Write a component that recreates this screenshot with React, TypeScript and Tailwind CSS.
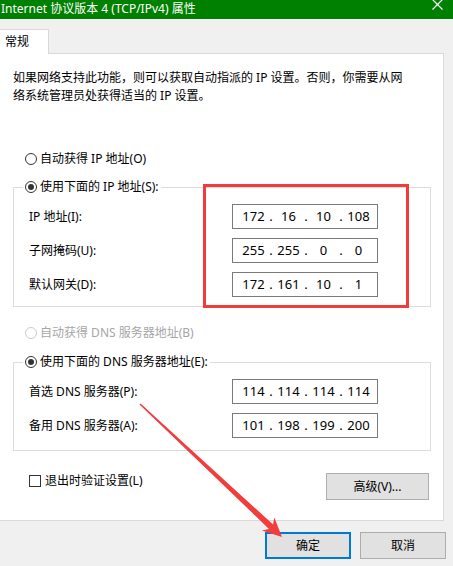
import { Fragment } from "react";

const ipRows = [
  { label: "IP 地址(I):", parts: ["172", "16", "10", "108"] },
  { label: "子网掩码(U):", parts: ["255", "255", "0", "0"] },
  { label: "默认网关(D):", parts: ["172", "161", "10", "1"] },
];

const dnsRows = [
  { label: "首选 DNS 服务器(P):", parts: ["114", "114", "114", "114"] },
  { label: "备用 DNS 服务器(A):", parts: ["101", "198", "199", "200"] },
];

const Radio = ({ checked = false, disabled = false }: { checked?: boolean; disabled?: boolean }) => (
  <span
    className={`flex h-[12px] w-[12px] shrink-0 items-center justify-center rounded-full border bg-white ${
      disabled ? "border-[#cccccc]" : "border-[#333333]"
    }`}
  >
    {checked && <span className="h-[6px] w-[6px] rounded-full bg-[#333333]" />}
  </span>
);

const IpField = ({ parts }: { parts: string[] }) => (
  <div className="flex h-[25px] w-[146px] items-center border border-[#7a7a7a] bg-white pl-[7px] text-[13px] leading-none">
    {parts.map((p, i) => (
      <Fragment key={i}>
        <span className="w-[27px] text-center">{p}</span>
        {i < 3 && <span className="w-[8px] text-center">.</span>}
      </Fragment>
    ))}
  </div>
);

const FieldRow = ({ label, parts }: { label: string; parts: string[] }) => (
  <div className="flex items-center pl-[15px]">
    <span className="w-[203px]">{label}</span>
    <IpField parts={parts} />
  </div>
);

export default function App() {
  return (
    <div className="relative h-[566px] w-[453px] overflow-hidden bg-[#f0f0f0] font-['Noto_Sans','Noto_Sans_CJK_SC',sans-serif] text-[12px] text-black">
      {/* title bar */}
      <div className="flex h-[19px] items-start justify-between bg-[#008000] text-white">
        <span className="pl-px leading-[18px]">Internet 协议版本 4 (TCP/IPv4) 属性</span>
        <svg className="mr-[10px]" width="11" height="10" viewBox="0 0 11 10">
          <path d="M0.5 -0.5 L10.5 9.5 M10.5 -0.5 L0.5 9.5" stroke="#fff" strokeWidth="1.2" />
        </svg>
      </div>

      <div className="pt-[10px]">
        <div className="relative z-10 -mb-px h-[25px] w-[49px] border-t border-r border-[#d9d9d9] bg-white pl-[5px] leading-[24px]">
          常规
        </div>

        <div className="h-[468px] w-[444px] border-t border-r border-b border-[#d9d9d9] bg-white">
          <p className="px-[13px] pt-[15px] leading-[18px]">
            如果网络支持此功能，则可以获取自动指派的 IP 设置。否则，你需要从网
            <br />
            络系统管理员处获得适当的 IP 设置。
          </p>

          <div className="mt-[46px] ml-[25px] flex h-[16px] items-center gap-[3px]">
            <Radio />
            <span>自动获得 IP 地址(O)</span>
          </div>

          <div className="mt-[20px] ml-[13px] w-[418px] border border-[#dcdcdc] pb-[9px]">
            <div className="-mt-[9px] ml-[9px] flex h-[16px] w-fit items-center gap-[3px] bg-white px-[2px]">
              <Radio checked />
              <span>使用下面的 IP 地址(S):</span>
            </div>
            <div className="mt-[9px] flex flex-col gap-[9px]">
              {ipRows.map((r) => (
                <FieldRow key={r.label} label={r.label} parts={r.parts} />
              ))}
            </div>
          </div>

          <div className="mt-[18px] ml-[25px] flex h-[16px] items-center gap-[3px] text-[#a6a6a6]">
            <Radio disabled />
            <span>自动获得 DNS 服务器地址(B)</span>
          </div>

          <div className="mt-[21px] ml-[13px] w-[418px] border border-[#dcdcdc] pb-[12px]">
            <div className="-mt-[9px] ml-[9px] flex h-[16px] w-fit items-center gap-[3px] bg-white px-[2px]">
              <Radio checked />
              <span>使用下面的 DNS 服务器地址(E):</span>
            </div>
            <div className="mt-[9px] flex flex-col gap-[9px]">
              {dnsRows.map((r) => (
                <FieldRow key={r.label} label={r.label} parts={r.parts} />
              ))}
            </div>
          </div>

          <div className="mt-[22px] flex items-start justify-between pl-[29px] pr-[14px]">
            <div className="flex h-[16px] items-center gap-[4px]">
              <span className="h-[12px] w-[12px] border border-[#333333] bg-white" />
              <span>退出时验证设置(L)</span>
            </div>
            <button className="h-[27px] w-[103px] border border-[#adadad] bg-[#e1e1e1]">高级(V)...</button>
          </div>
        </div>

        <div className="mt-[11px] flex justify-end gap-[9px] pr-[7px]">
          <button className="h-[27px] w-[86px] border-2 border-[#0078d7] bg-[#e1e1e1]">确定</button>
          <button className="h-[27px] w-[86px] border border-[#adadad] bg-[#e1e1e1]">取消</button>
        </div>
      </div>

      {/* annotation overlays */}
      <div className="pointer-events-none absolute left-[203px] top-[184px] h-[124px] w-[206px] border-[3px] border-[#f23b3b]" />
      <svg className="pointer-events-none absolute left-0 top-0" width="453" height="566">
        <polygon
          points="139.45,404.6 269,528.9 261.9,530.6 282,537 274.3,517.4 273.1,524.5 140.55,403.4"
          fill="#f23d3d"
        />
      </svg>
    </div>
  );
}
